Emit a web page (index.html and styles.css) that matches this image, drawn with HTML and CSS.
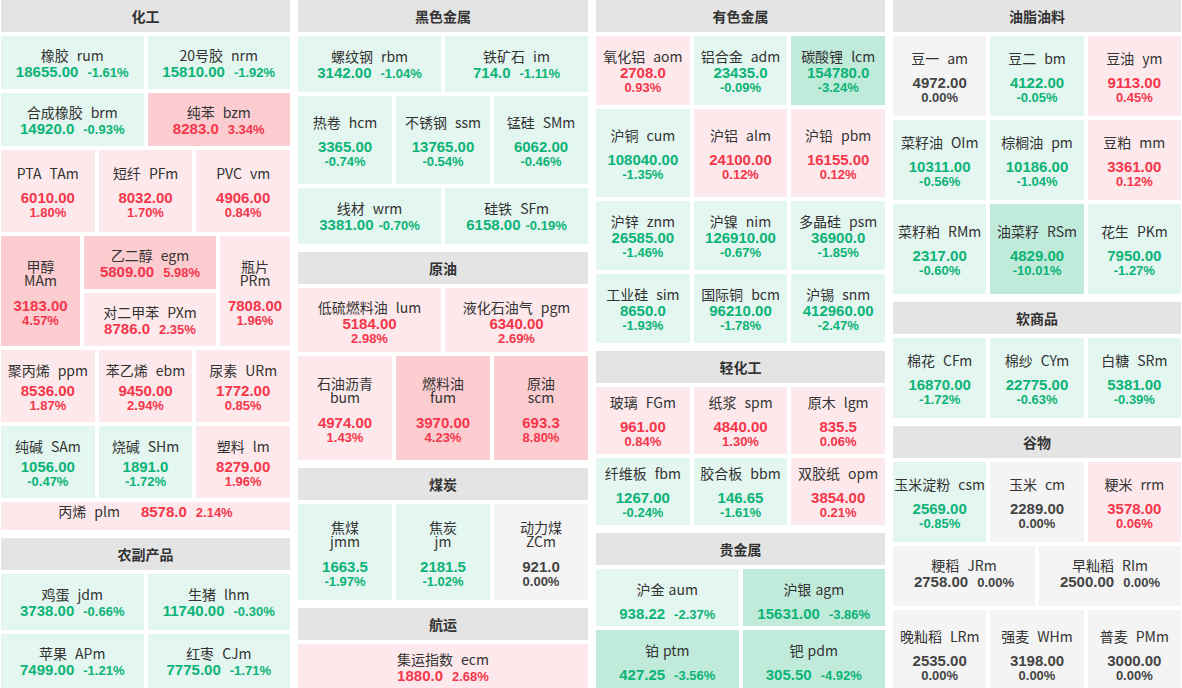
FILE: index.html
```html
<!DOCTYPE html>
<html lang="zh-CN">
<head>
<meta charset="utf-8">
<title>期货板块</title>
<link rel="stylesheet" href="styles.css">
</head>
<body>
<main class="board">
  <!-- Column 1 -->
  <div class="col">
    <section class="sec">
      <div class="hd">化工</div>
      <div class="row" style="height:53px">
        <div class="cell g"><div class="nm">橡胶<span class="cd">rum</span></div><div class="ln"><b class="v">18655.00</b><b class="p">-1.61%</b></div></div>
        <div class="cell g"><div class="nm">20号胶<span class="cd">nrm</span></div><div class="ln"><b class="v">15810.00</b><b class="p">-1.92%</b></div></div>
      </div>
      <div class="row" style="height:53px">
        <div class="cell g"><div class="nm">合成橡胶<span class="cd">brm</span></div><div class="ln"><b class="v">14920.0</b><b class="p">-0.93%</b></div></div>
        <div class="cell R"><div class="nm">纯苯<span class="cd">bzm</span></div><div class="ln"><b class="v">8283.0</b><b class="p">3.34%</b></div></div>
      </div>
      <div class="row" style="height:82px">
        <div class="cell r s9"><div class="nm">PTA<span class="cd">TAm</span></div><b class="v">6010.00</b><b class="p">1.80%</b></div>
        <div class="cell r s9"><div class="nm">短纤<span class="cd">PFm</span></div><b class="v">8032.00</b><b class="p">1.70%</b></div>
        <div class="cell r s9"><div class="nm">PVC<span class="cd">vm</span></div><b class="v">4906.00</b><b class="p">0.84%</b></div>
      </div>
      <div class="row" style="height:110px">
        <div class="cell R wrap" style="flex:0 0 79px"><div class="nm">甲醇<span class="cd">MAm</span></div><b class="v">3183.00</b><b class="p">4.57%</b></div>
        <div class="stackc" style="flex:0 0 132px">
          <div class="cell R"><div class="nm">乙二醇<span class="cd">egm</span></div><div class="ln"><b class="v">5809.00</b><b class="p">5.98%</b></div></div>
          <div class="cell r"><div class="nm">对二甲苯<span class="cd">PXm</span></div><div class="ln"><b class="v">8786.0</b><b class="p">2.35%</b></div></div>
        </div>
        <div class="cell r wrap"><div class="nm">瓶片<span class="cd">PRm</span></div><b class="v">7808.00</b><b class="p">1.96%</b></div>
      </div>
      <div class="row" style="height:72px">
        <div class="cell r s4"><div class="nm">聚丙烯<span class="cd">ppm</span></div><b class="v">8536.00</b><b class="p">1.87%</b></div>
        <div class="cell r s4"><div class="nm">苯乙烯<span class="cd">ebm</span></div><b class="v">9450.00</b><b class="p">2.94%</b></div>
        <div class="cell r s4"><div class="nm">尿素<span class="cd">URm</span></div><b class="v">1772.00</b><b class="p">0.85%</b></div>
      </div>
      <div class="row" style="height:72px">
        <div class="cell g s4"><div class="nm">纯碱<span class="cd">SAm</span></div><b class="v">1056.00</b><b class="p">-0.47%</b></div>
        <div class="cell g s4"><div class="nm">烧碱<span class="cd">SHm</span></div><b class="v">1891.0</b><b class="p">-1.72%</b></div>
        <div class="cell r s4"><div class="nm">塑料<span class="cd">lm</span></div><b class="v">8279.00</b><b class="p">1.96%</b></div>
      </div>
      <div class="row" style="height:28px">
        <div class="cell r flat"><div class="nm">丙烯<span class="cd">plm</span></div><b class="v">8578.0</b><b class="p">2.14%</b></div>
      </div>
    </section>
    <section class="sec">
      <div class="hd">农副产品</div>
      <div class="row" style="height:56px">
        <div class="cell g"><div class="nm">鸡蛋<span class="cd">jdm</span></div><div class="ln"><b class="v">3738.00</b><b class="p">-0.66%</b></div></div>
        <div class="cell g"><div class="nm">生猪<span class="cd">lhm</span></div><div class="ln"><b class="v">11740.00</b><b class="p">-0.30%</b></div></div>
      </div>
      <div class="row" style="height:54px">
        <div class="cell g"><div class="nm">苹果<span class="cd">APm</span></div><div class="ln"><b class="v">7499.00</b><b class="p">-1.21%</b></div></div>
        <div class="cell g"><div class="nm">红枣<span class="cd">CJm</span></div><div class="ln"><b class="v">7775.00</b><b class="p">-1.71%</b></div></div>
      </div>
    </section>
  </div>

  <!-- Column 2 -->
  <div class="col">
    <section class="sec">
      <div class="hd">黑色金属</div>
      <div class="row" style="height:56px">
        <div class="cell g"><div class="nm">螺纹钢<span class="cd">rbm</span></div><div class="ln"><b class="v">3142.00</b><b class="p">-1.04%</b></div></div>
        <div class="cell g"><div class="nm">铁矿石<span class="cd">im</span></div><div class="ln"><b class="v">714.0</b><b class="p">-1.11%</b></div></div>
      </div>
      <div class="row" style="height:88px">
        <div class="cell g s9"><div class="nm">热卷<span class="cd">hcm</span></div><b class="v">3365.00</b><b class="p">-0.74%</b></div>
        <div class="cell g s9"><div class="nm">不锈钢<span class="cd">ssm</span></div><b class="v">13765.00</b><b class="p">-0.54%</b></div>
        <div class="cell g s9"><div class="nm">锰硅<span class="cd">SMm</span></div><b class="v">6062.00</b><b class="p">-0.46%</b></div>
      </div>
      <div class="row" style="height:56px">
        <div class="cell g tight"><div class="nm">线材<span class="cd">wrm</span></div><div class="ln"><b class="v">3381.00</b><b class="p">-0.70%</b></div></div>
        <div class="cell g tight"><div class="nm">硅铁<span class="cd">SFm</span></div><div class="ln"><b class="v">6158.00</b><b class="p">-0.19%</b></div></div>
      </div>
    </section>
    <section class="sec">
      <div class="hd">原油</div>
      <div class="row" style="height:64px">
        <div class="cell r low"><div class="nm">低硫燃料油<span class="cd">lum</span></div><b class="v">5184.00</b><b class="p">2.98%</b></div>
        <div class="cell r low"><div class="nm">液化石油气<span class="cd">pgm</span></div><b class="v">6340.00</b><b class="p">2.69%</b></div>
      </div>
      <div class="row" style="height:104px">
        <div class="cell r wrap"><div class="nm">石油沥青<span class="cd">bum</span></div><b class="v">4974.00</b><b class="p">1.43%</b></div>
        <div class="cell R wrap"><div class="nm">燃料油<span class="cd">fum</span></div><b class="v">3970.00</b><b class="p">4.23%</b></div>
        <div class="cell R wrap"><div class="nm">原油<span class="cd">scm</span></div><b class="v">693.3</b><b class="p">8.80%</b></div>
      </div>
    </section>
    <section class="sec">
      <div class="hd">煤炭</div>
      <div class="row" style="height:96px">
        <div class="cell g wrap"><div class="nm">焦煤<span class="cd">jmm</span></div><b class="v">1663.5</b><b class="p">-1.97%</b></div>
        <div class="cell g wrap"><div class="nm">焦炭<span class="cd">jm</span></div><b class="v">2181.5</b><b class="p">-1.02%</b></div>
        <div class="cell z wrap"><div class="nm">动力煤<span class="cd">ZCm</span></div><b class="v">921.0</b><b class="p">0.00%</b></div>
      </div>
    </section>
    <section class="sec">
      <div class="hd">航运</div>
      <div class="row" style="height:46px">
        <div class="cell r"><div class="nm">集运指数<span class="cd">ecm</span></div><div class="ln"><b class="v">1880.0</b><b class="p">2.68%</b></div></div>
      </div>
    </section>
  </div>

  <!-- Column 3 -->
  <div class="col">
    <section class="sec">
      <div class="hd">有色金属</div>
      <div class="row" style="height:69px">
        <div class="cell r"><div class="nm">氧化铝<span class="cd">aom</span></div><b class="v">2708.0</b><b class="p">0.93%</b></div>
        <div class="cell g"><div class="nm">铝合金<span class="cd">adm</span></div><b class="v">23435.0</b><b class="p">-0.09%</b></div>
        <div class="cell G"><div class="nm">碳酸锂<span class="cd">lcm</span></div><b class="v">154780.0</b><b class="p">-3.24%</b></div>
      </div>
      <div class="row" style="height:88px">
        <div class="cell g s9"><div class="nm">沪铜<span class="cd">cum</span></div><b class="v">108040.00</b><b class="p">-1.35%</b></div>
        <div class="cell r s9"><div class="nm">沪铝<span class="cd">alm</span></div><b class="v">24100.00</b><b class="p">0.12%</b></div>
        <div class="cell r s9"><div class="nm">沪铅<span class="cd">pbm</span></div><b class="v">16155.00</b><b class="p">0.12%</b></div>
      </div>
      <div class="row" style="height:69px">
        <div class="cell g"><div class="nm">沪锌<span class="cd">znm</span></div><b class="v">26585.00</b><b class="p">-1.46%</b></div>
        <div class="cell g"><div class="nm">沪镍<span class="cd">nim</span></div><b class="v">126910.00</b><b class="p">-0.67%</b></div>
        <div class="cell g"><div class="nm">多晶硅<span class="cd">psm</span></div><b class="v">36900.0</b><b class="p">-1.85%</b></div>
      </div>
      <div class="row" style="height:69px">
        <div class="cell g"><div class="nm">工业硅<span class="cd">sim</span></div><b class="v">8650.0</b><b class="p">-1.93%</b></div>
        <div class="cell g"><div class="nm">国际铜<span class="cd">bcm</span></div><b class="v">96210.00</b><b class="p">-1.78%</b></div>
        <div class="cell g"><div class="nm">沪锡<span class="cd">snm</span></div><b class="v">412960.00</b><b class="p">-2.47%</b></div>
      </div>
    </section>
    <section class="sec">
      <div class="hd">轻化工</div>
      <div class="row" style="height:67px">
        <div class="cell r s9"><div class="nm">玻璃<span class="cd">FGm</span></div><b class="v">961.00</b><b class="p">0.84%</b></div>
        <div class="cell r s9"><div class="nm">纸浆<span class="cd">spm</span></div><b class="v">4840.00</b><b class="p">1.30%</b></div>
        <div class="cell r s9"><div class="nm">原木<span class="cd">lgm</span></div><b class="v">835.5</b><b class="p">0.06%</b></div>
      </div>
      <div class="row" style="height:67px">
        <div class="cell g s9"><div class="nm">纤维板<span class="cd">fbm</span></div><b class="v">1267.00</b><b class="p">-0.24%</b></div>
        <div class="cell g s9"><div class="nm">胶合板<span class="cd">bbm</span></div><b class="v">146.65</b><b class="p">-1.61%</b></div>
        <div class="cell r s9"><div class="nm">双胶纸<span class="cd">opm</span></div><b class="v">3854.00</b><b class="p">0.21%</b></div>
      </div>
    </section>
    <section class="sec">
      <div class="hd">贵金属</div>
      <div class="row" style="height:57px">
        <div class="cell g s9 one"><div class="nm">沪金<span class="cd">aum</span></div><div class="ln"><b class="v">938.22</b><b class="p">-2.37%</b></div></div>
        <div class="cell G s9 one"><div class="nm">沪银<span class="cd">agm</span></div><div class="ln"><b class="v">15631.00</b><b class="p">-3.86%</b></div></div>
      </div>
      <div class="row" style="height:58px">
        <div class="cell G s9 one"><div class="nm">铂<span class="cd">ptm</span></div><div class="ln"><b class="v">427.25</b><b class="p">-3.56%</b></div></div>
        <div class="cell G s9 one"><div class="nm">钯<span class="cd">pdm</span></div><div class="ln"><b class="v">305.50</b><b class="p">-4.92%</b></div></div>
      </div>
    </section>
  </div>

  <!-- Column 4 -->
  <div class="col">
    <section class="sec">
      <div class="hd">油脂油料</div>
      <div class="row" style="height:80px">
        <div class="cell z s9"><div class="nm">豆一<span class="cd">am</span></div><b class="v">4972.00</b><b class="p">0.00%</b></div>
        <div class="cell g s9"><div class="nm">豆二<span class="cd">bm</span></div><b class="v">4122.00</b><b class="p">-0.05%</b></div>
        <div class="cell r s9"><div class="nm">豆油<span class="cd">ym</span></div><b class="v">9113.00</b><b class="p">0.45%</b></div>
      </div>
      <div class="row" style="height:80px">
        <div class="cell g s9"><div class="nm">菜籽油<span class="cd">OIm</span></div><b class="v">10311.00</b><b class="p">-0.56%</b></div>
        <div class="cell g s9"><div class="nm">棕榈油<span class="cd">pm</span></div><b class="v">10186.00</b><b class="p">-1.04%</b></div>
        <div class="cell r s9"><div class="nm">豆粕<span class="cd">mm</span></div><b class="v">3361.00</b><b class="p">0.12%</b></div>
      </div>
      <div class="row" style="height:90px">
        <div class="cell g s9"><div class="nm">菜籽粕<span class="cd">RMm</span></div><b class="v">2317.00</b><b class="p">-0.60%</b></div>
        <div class="cell G s9"><div class="nm">油菜籽<span class="cd">RSm</span></div><b class="v">4829.00</b><b class="p">-10.01%</b></div>
        <div class="cell g s9"><div class="nm">花生<span class="cd">PKm</span></div><b class="v">7950.00</b><b class="p">-1.27%</b></div>
      </div>
    </section>
    <section class="sec">
      <div class="hd">软商品</div>
      <div class="row" style="height:80px">
        <div class="cell g s9"><div class="nm">棉花<span class="cd">CFm</span></div><b class="v">16870.00</b><b class="p">-1.72%</b></div>
        <div class="cell g s9"><div class="nm">棉纱<span class="cd">CYm</span></div><b class="v">22775.00</b><b class="p">-0.63%</b></div>
        <div class="cell g s9"><div class="nm">白糖<span class="cd">SRm</span></div><b class="v">5381.00</b><b class="p">-0.39%</b></div>
      </div>
    </section>
    <section class="sec">
      <div class="hd">谷物</div>
      <div class="row" style="height:80px">
        <div class="cell g s9"><div class="nm">玉米淀粉<span class="cd">csm</span></div><b class="v">2569.00</b><b class="p">-0.85%</b></div>
        <div class="cell z s9"><div class="nm">玉米<span class="cd">cm</span></div><b class="v">2289.00</b><b class="p">0.00%</b></div>
        <div class="cell r s9"><div class="nm">粳米<span class="cd">rrm</span></div><b class="v">3578.00</b><b class="p">0.06%</b></div>
      </div>
      <div class="row" style="height:60px">
        <div class="cell z up"><div class="nm">粳稻<span class="cd">JRm</span></div><div class="ln"><b class="v">2758.00</b><b class="p">0.00%</b></div></div>
        <div class="cell z up"><div class="nm">早籼稻<span class="cd">RIm</span></div><div class="ln"><b class="v">2500.00</b><b class="p">0.00%</b></div></div>
      </div>
      <div class="row" style="height:89px">
        <div class="cell z s9"><div class="nm">晚籼稻<span class="cd">LRm</span></div><b class="v">2535.00</b><b class="p">0.00%</b></div>
        <div class="cell z s9"><div class="nm">强麦<span class="cd">WHm</span></div><b class="v">3198.00</b><b class="p">0.00%</b></div>
        <div class="cell z s9"><div class="nm">普麦<span class="cd">PMm</span></div><b class="v">3000.00</b><b class="p">0.00%</b></div>
      </div>
    </section>
  </div>
</main>
</body>
</html>
```

FILE: styles.css
```css
html, body {
  margin: 0;
  height: 688px;
  overflow: hidden;
  background: #fff;
}

body {
  font-family: "Noto Sans CJK SC", "Noto Sans", sans-serif;
  color: #333;
}

.board {
  display: grid;
  grid-template-columns: 289px 290px 289px 288px;
  column-gap: 8px;
  padding-left: 1px;
  align-items: start;
}

.col {
  display: flex;
  flex-direction: column;
  gap: 8px;
}

.sec {
  display: flex;
  flex-direction: column;
  gap: 4px;
}

.hd {
  height: 32px;
  line-height: 32px;
  background: #e4e4e4;
  font-size: 14px;
  font-weight: 700;
  text-align: center;
  color: #333;
}

.row {
  display: flex;
  gap: 4px;
}

.row > .cell {
  flex: 1 1 0;
  min-width: 0;
}

.stackc {
  display: flex;
  flex-direction: column;
  gap: 4px;
}

.stackc > .cell {
  flex: 1 1 0;
}

.cell {
  display: flex;
  flex-direction: column;
  align-items: center;
  justify-content: center;
  text-align: center;
  overflow: hidden;
  box-sizing: border-box;
}

.nm {
  font-size: 14px;
  line-height: 18px;
  white-space: nowrap;
  color: #333;
}

.cd {
  margin-left: 8px;
}

.one {
  padding-top: 6px;
}

.one .cd {
  margin-left: 4px;
}

.up {
  padding-bottom: 6px;
}

.low {
  padding-top: 3px;
}

.ln {
  display: flex;
  align-items: baseline;
  justify-content: center;
  white-space: nowrap;
}

.v,
.p {
  display: block;
  font-family: "Liberation Sans", Arial, sans-serif;
  font-weight: 700;
}

.v {
  font-size: 15px;
  line-height: 16px;
}

.p {
  font-size: 13px;
  line-height: 13px;
}

.ln .p {
  margin-left: 9px;
}

.tight .ln .p {
  margin-left: 5px;
}

.s4 > .v {
  margin-top: 4px;
}

.s9 > .v,
.s9 > .ln {
  margin-top: 8px;
}

.wrap {
  padding-top: 4px;
}

.wrap .nm {
  white-space: normal;
  line-height: 14px;
}

.wrap .cd {
  display: block;
  margin-left: 0;
}

.wrap > .v {
  margin-top: 11px;
}

.flat {
  flex-direction: row;
  align-items: baseline;
}

.flat .nm {
  margin-right: 21px;
}

.flat .p {
  margin-left: 9px;
}

/* backgrounds */
.g { background: #e3f6ef; }
.G { background: #c0ebda; }
.r { background: #fde9eb; }
.R { background: #fccdd0; }
.z { background: #f4f4f4; }

/* value colours */
.g .v, .g .p, .G .v, .G .p { color: #0db377; }
.r .v, .r .p, .R .v, .R .p { color: #f5364b; }
.z .v, .z .p { color: #444; }
```
